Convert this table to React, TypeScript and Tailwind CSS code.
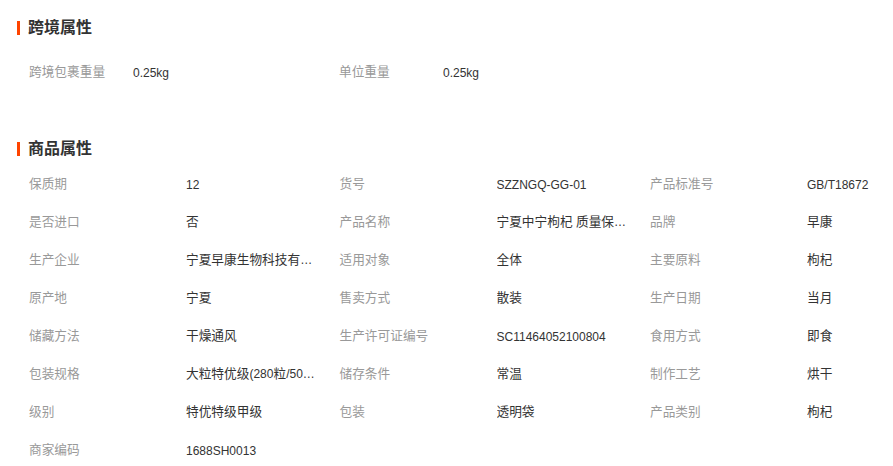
const crossBorder = [
  { label: "跨境包裹重量", value: "0.25kg" },
  { label: "单位重量", value: "0.25kg" },
];

const productAttrs = [
  { label: "保质期", value: "12" },
  { label: "货号", value: "SZZNGQ-GG-01" },
  { label: "产品标准号", value: "GB/T18672" },
  { label: "是否进口", value: "否" },
  { label: "产品名称", value: "宁夏中宁枸杞 质量保证 特级" },
  { label: "品牌", value: "早康" },
  { label: "生产企业", value: "宁夏早康生物科技有限公司" },
  { label: "适用对象", value: "全体" },
  { label: "主要原料", value: "枸杞" },
  { label: "原产地", value: "宁夏" },
  { label: "售卖方式", value: "散装" },
  { label: "生产日期", value: "当月" },
  { label: "储藏方法", value: "干燥通风" },
  { label: "生产许可证编号", value: "SC11464052100804" },
  { label: "食用方式", value: "即食" },
  { label: "包装规格", value: "大粒特优级(280粒/500g)" },
  { label: "储存条件", value: "常温" },
  { label: "制作工艺", value: "烘干" },
  { label: "级别", value: "特优特级甲级" },
  { label: "包装", value: "透明袋" },
  { label: "产品类别", value: "枸杞" },
  { label: "商家编码", value: "1688SH0013" },
];

// CJK glyphs in the original render a touch wider than the latin text
function MixedText({ text }: { text: string }) {
  const parts = text.split(/([\u4e00-\u9fff]+)/);
  return (
    <>
      {parts.map((p, i) =>
        /[\u4e00-\u9fff]/.test(p) ? (
          <span key={i} className="text-[12.7px]">
            {p}
          </span>
        ) : (
          p
        )
      )}
    </>
  );
}

function SectionTitle({ title }: { title: string }) {
  return (
    <h2 className="flex h-6 items-center gap-[8px] text-[16px] font-bold text-[#333]">
      <span className="h-[14px] w-[3px] bg-[#ff4400]" />
      {title}
    </h2>
  );
}

export default function App() {
  return (
    <div className="min-h-[466px] w-[893px] overflow-hidden bg-white pl-[17px] font-['Liberation_Sans','Noto_Sans_CJK_SC',sans-serif] text-[12px]">
      <section className="pt-4">
        <SectionTitle title="跨境属性" />
        <div className="mt-[14px] grid grid-cols-[310px_310px] pl-3">
          {crossBorder.map((a) => (
            <div key={a.label} className="flex h-[38px] items-center">
              <span className="w-[104px] shrink-0 text-[#999]">
                <MixedText text={a.label} />
              </span>
              <span className="text-[#333]">
                <MixedText text={a.value} />
              </span>
            </div>
          ))}
        </div>
      </section>

      <section className="mt-[45px]">
        <SectionTitle title="商品属性" />
        <div className="mt-[5px] grid w-[944px] grid-cols-[310.5px_310.5px_310.5px] pl-3">
          {productAttrs.map((a) => (
            <div key={a.label} className="flex h-[38px] items-center">
              <span className="w-[157px] shrink-0 text-[#999]">
                <MixedText text={a.label} />
              </span>
              <span className="w-[132px] overflow-hidden text-ellipsis whitespace-nowrap text-[#333]">
                <MixedText text={a.value} />
              </span>
            </div>
          ))}
        </div>
      </section>
    </div>
  );
}
